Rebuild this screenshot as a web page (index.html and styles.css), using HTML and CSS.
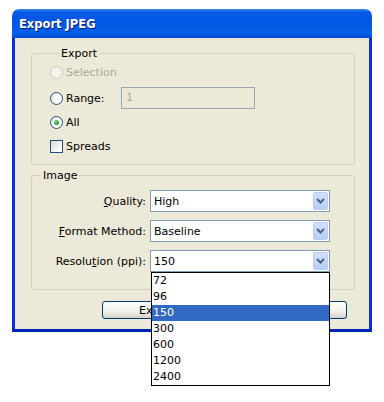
FILE: index.html
```html
<!DOCTYPE html>
<html lang="en">
<head>
<meta charset="UTF-8">
<title>Export JPEG</title>
<link rel="stylesheet" href="styles.css">
</head>
<body>
<div class="window">
    <div class="titlebar">Export JPEG</div>
    <div class="frame">
        <fieldset class="group group-export">
            <legend>Export</legend>
            <div class="row disabled"><span class="radio"></span>Selection</div>
            <div class="row range-row">
                <span class="radio"></span>
                <span class="range-label">Range:</span>
                <span class="text-input">1</span>
            </div>
            <div class="row"><span class="radio checked"></span>All</div>
            <div class="row"><span class="checkbox"></span>Spreads</div>
        </fieldset>

        <fieldset class="group group-image">
            <legend>Image</legend>
            <div class="fields">
                <span class="field-label"><u>Q</u>uality:</span>
                <div class="combo">
                    <span class="combo-value">High</span>
                    <span class="combo-btn"><svg width="9" height="6" viewBox="0 0 9 6"><polyline points="1,1 4.5,4.5 8,1" fill="none" stroke="#4d6185" stroke-width="2"/></svg></span>
                </div>

                <span class="field-label"><u>F</u>ormat Method:</span>
                <div class="combo">
                    <span class="combo-value">Baseline</span>
                    <span class="combo-btn"><svg width="9" height="6" viewBox="0 0 9 6"><polyline points="1,1 4.5,4.5 8,1" fill="none" stroke="#4d6185" stroke-width="2"/></svg></span>
                </div>

                <span class="field-label">Resolu<u>t</u>ion (ppi):</span>
                <div class="combo">
                    <span class="combo-value">150</span>
                    <span class="combo-btn"><svg width="9" height="6" viewBox="0 0 9 6"><polyline points="1,1 4.5,4.5 8,1" fill="none" stroke="#4d6185" stroke-width="2"/></svg></span>
                </div>
            </div>
        </fieldset>

        <div class="buttons">
            <button class="btn">Export</button>
            <button class="btn">Cancel</button>
        </div>
    </div>

    <!-- open list of the Resolution combo, drawn over the dialog -->
    <ul class="dropdown">
        <li>72</li>
        <li>96</li>
        <li class="selected">150</li>
        <li>300</li>
        <li>600</li>
        <li>1200</li>
        <li>2400</li>
    </ul>
</div>
</body>
</html>
```

FILE: styles.css
```css
html {
    height: 100%;
}

body {
    margin: 0;
    padding: 0;
    min-height: 100%;
    background-color: #ffffff;
    font-family: "DejaVu Sans", Verdana, sans-serif;
    font-size: 11px;
    color: #000;
}

.window {
    width: 360px;
    margin: 0 0 0 12px;
    padding-top: 9px;
    padding-bottom: 70px;
    position: relative;
}

.titlebar {
    height: 29px;
    box-sizing: border-box;
    padding: 8px 0 0 7px;
    border-radius: 7px 7px 0 0;
    background: linear-gradient(to bottom, #3a8cf5 0%, #0a5be6 10%, #0055e5 45%, #0a5fe8 85%, #0046d0 100%);
    color: white;
    font-weight: bold;
    font-size: 11.5px;
    text-shadow: 1px 1px 0 #0a1f7a;
}

.frame {
    height: 294px;
    box-sizing: border-box;
    background-color: #ece9d8;
    border: 3px solid #0831d9;
    border-top: none;
    border-bottom-color: #0024b8;
    padding: 9px 14px 0 16px;
}

.group {
    margin: 0;
    border: 1px solid #d0d0bf;
    border-radius: 3px;
    min-width: 0;
}

.group legend {
    margin-left: 9px;
    padding: 0 2px;
    line-height: 13px;
}

.group-export {
    padding: 0 0 6px 18px;
}

.group-image {
    margin-top: 4px;
    padding: 8px 0 17px 0;
}

.row {
    height: 24px;
    display: flex;
    align-items: center;
}

.row.disabled {
    color: #aca899;
}

.range-row {
    margin-top: 2px;
}

.radio {
    width: 11px;
    height: 11px;
    border: 1px solid #1c5180;
    border-radius: 50%;
    background: radial-gradient(circle at 65% 65%, #ffffff 30%, #dcdcd4 100%);
    margin-right: 3px;
    position: relative;
}

.disabled .radio {
    border-color: #cac8bb;
    background: #f4f3ee;
}

.radio.checked::after {
    content: "";
    position: absolute;
    left: 3px;
    top: 3px;
    width: 5px;
    height: 5px;
    border-radius: 50%;
    background: radial-gradient(circle at 35% 35%, #7ad07a, #21a121 70%);
}

.checkbox {
    width: 11px;
    height: 11px;
    border: 1px solid #1c5180;
    background: linear-gradient(135deg, #dcdcd4 0%, #ffffff 90%);
    margin-right: 3px;
}

.range-label {
    width: 55px;
}

.text-input {
    width: 134px;
    height: 22px;
    box-sizing: border-box;
    border: 1px solid #9aa6b8;
    padding: 3px 0 0 4px;
    color: #aca899;
}

.fields {
    display: grid;
    grid-template-columns: 114px 180px;
    column-gap: 4px;
    row-gap: 8px;
    align-items: center;
}

.field-label {
    text-align: right;
}

.combo {
    height: 22px;
    box-sizing: border-box;
    border: 1px solid #7f9db9;
    background: white;
    display: flex;
    align-items: center;
    justify-content: space-between;
    padding: 0 1px 0 3px;
}

.combo-btn {
    width: 15px;
    height: 18px;
    box-sizing: border-box;
    border: 1px solid #bacdf3;
    border-radius: 2px;
    background: linear-gradient(to bottom, #d3e0fb 0%, #b8cdf8 100%);
    display: flex;
    align-items: center;
    justify-content: center;
}

.dropdown {
    position: absolute;
    top: 272px;
    left: 139px;
    width: 179px;
    height: 114px;
    box-sizing: border-box;
    margin: 0;
    padding: 0;
    list-style-type: none;
    background: white;
    border: 1px solid #000;
}

.dropdown li {
    height: 16px;
    line-height: 16px;
    padding-left: 1px;
}

.dropdown li.selected {
    background-color: #316ac5;
    color: white;
}

.buttons {
    margin: 11px 0 0 71px;
    display: flex;
    gap: 25px;
}

.btn {
    width: 110px;
    height: 18px;
    padding: 0;
    border: 1px solid #003c74;
    border-radius: 3px;
    background: linear-gradient(to bottom, #ffffff 0%, #f0f0ea 60%, #d6d0c5 100%);
    font-family: "DejaVu Sans", Verdana, sans-serif;
    font-size: 11px;
    color: #000;
}
```
